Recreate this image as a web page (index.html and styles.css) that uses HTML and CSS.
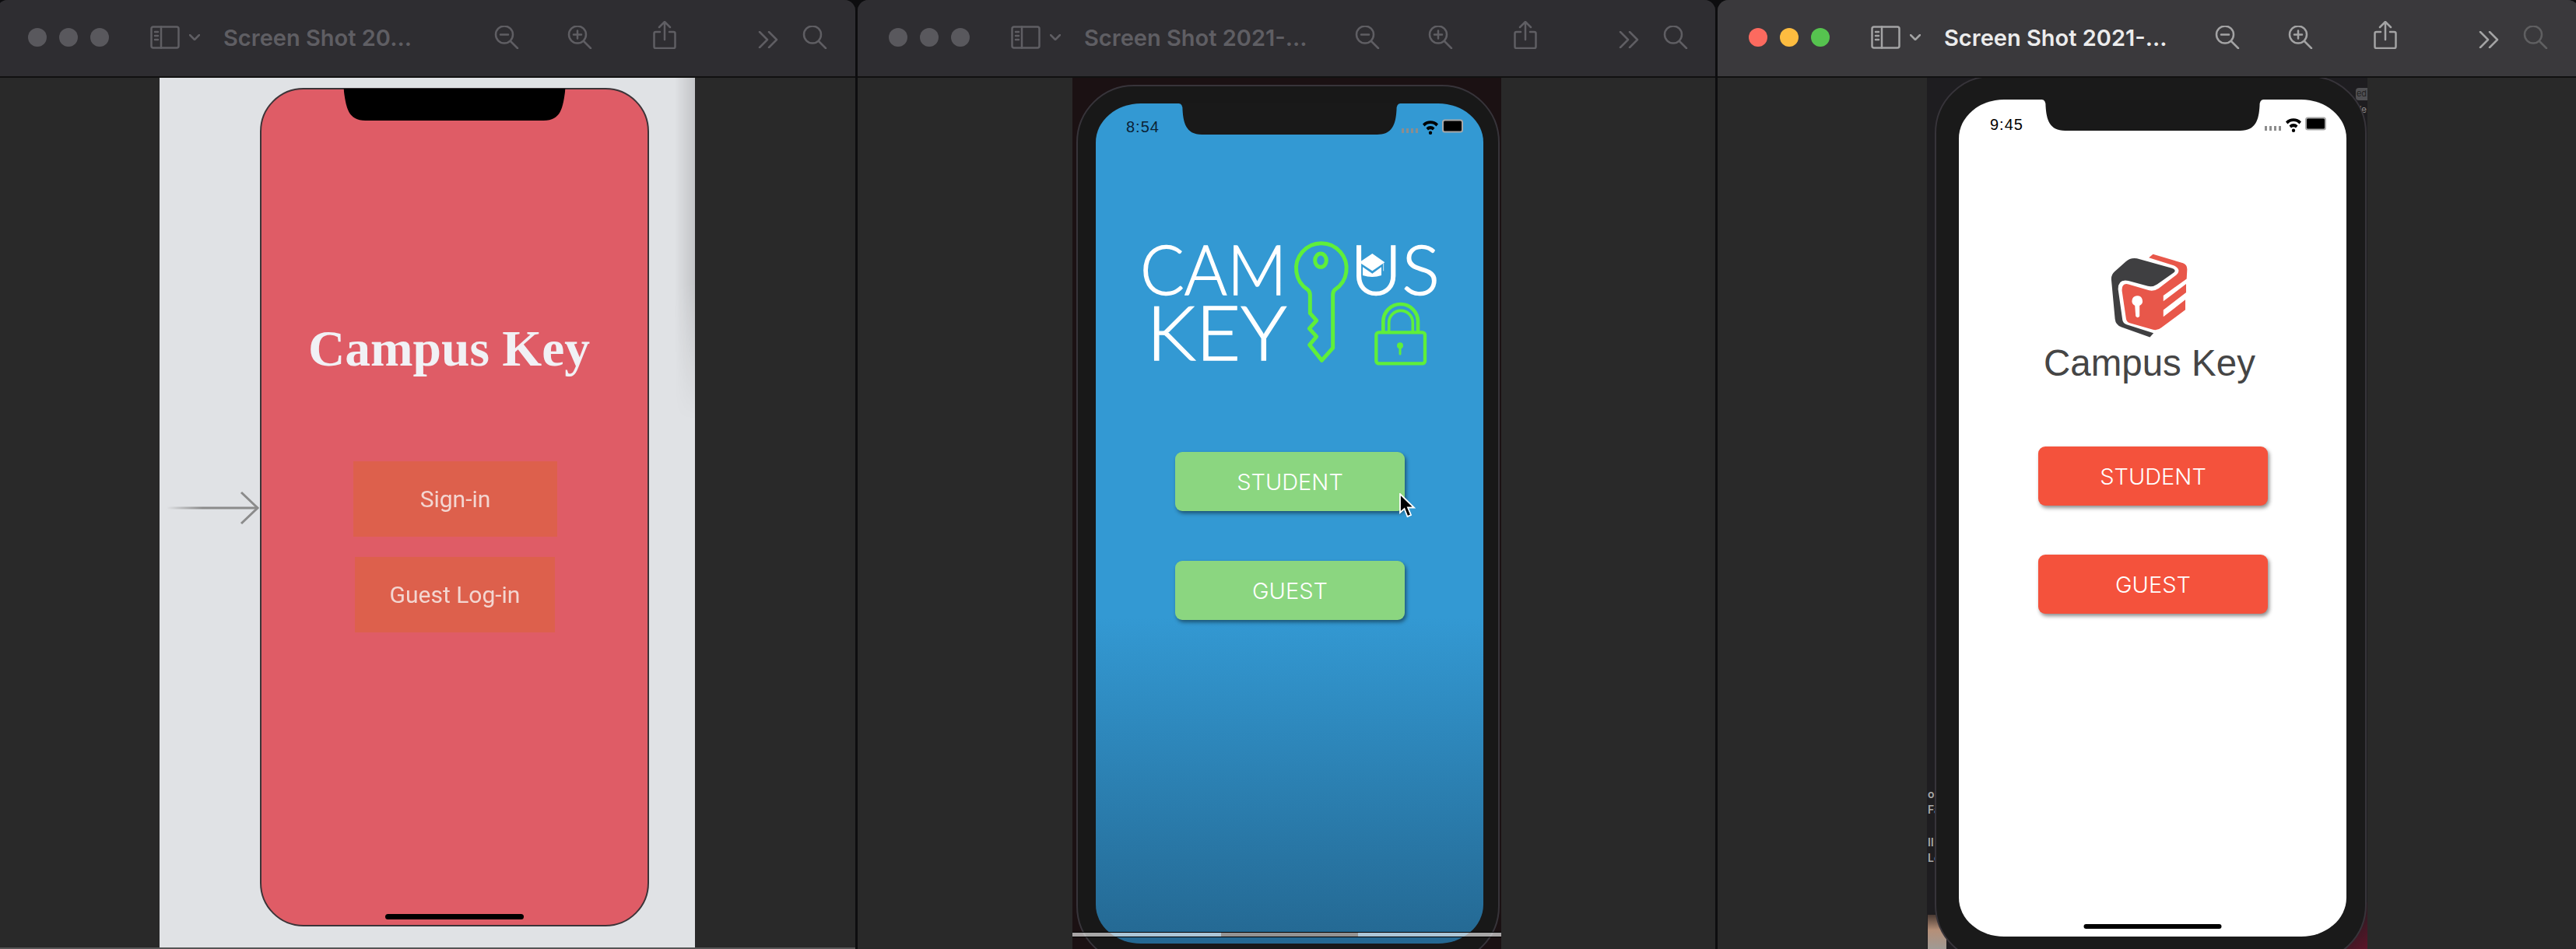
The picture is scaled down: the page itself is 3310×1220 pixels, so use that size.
FILE: index.html
```html
<!DOCTYPE html>
<html lang="en">
<head>
  <meta charset="UTF-8">
  <title>Campus Key screenshots</title>
  <link rel="stylesheet" href="styles.css">
</head>
<body>
  <!-- toolbar icons, used by all three windows -->
  <svg class="defs" width="0" height="0">
    <symbol id="i-sidebar" viewBox="0 0 38 30"><rect x="1.5" y="1.5" width="35" height="27" rx="2.5"/><path d="M14 1.5V28.5M6 8h4M6 13h4M6 18h4"/></symbol>
    <symbol id="i-down" viewBox="0 0 14 8"><path d="M1 1l6 6 6-6"/></symbol>
    <symbol id="i-zoom-out" viewBox="0 0 32 30"><circle cx="13" cy="11.5" r="11"/><path d="M21 20l9 9M8 11.5h10"/></symbol>
    <symbol id="i-zoom-in" viewBox="0 0 32 30"><circle cx="13" cy="11.5" r="11"/><path d="M21 20l9 9M8 11.5h10M13 6.5v10"/></symbol>
    <symbol id="i-share" viewBox="0 0 30 36"><path d="M9 14H3.5a2 2 0 0 0-2 2v17a2 2 0 0 0 2 2h23a2 2 0 0 0 2-2V16a2 2 0 0 0-2-2H21M15 24V2M8 8l7-7 7 7"/></symbol>
    <symbol id="i-more" viewBox="0 0 26 22"><path d="M2 1l10 10L2 21M14 1l10 10-10 10"/></symbol>
    <symbol id="i-search" viewBox="0 0 32 30"><circle cx="13" cy="11.5" r="11"/><path d="M21 20l9 9"/></symbol>
    <symbol id="i-status" viewBox="0 0 82 20">
      <path class="signal" d="M1 12h3v6H1zM7 12h3v6H7zM13 12h3v6h-3zM19 12h3v6h-3z"/>
      <path class="wifi" d="M28 6.5a14 14 0 0 1 20 0l-2.500 3a10 10 0 0 0-15 0zM32.500 11.500a7.500 7.500 0 0 1 11 0l-2.500 3a4 4 0 0 0-6 0zM38 15.500a2.200 2.200 0 1 1 0 4.400 2.200 2.200 0 1 1 0-4.400z"/>
      <rect class="batt" x="54" y="1.500" width="25" height="15" rx="2.500"/>
    </symbol>
  </svg>

  <div class="desktop">
    <!-- storyboard window -->
    <div class="window window-board">
      <div class="toolbar">
        <div class="lights"><i></i><i></i><i></i></div>
        <svg class="ico sidebar"><use href="#i-sidebar"/></svg>
        <svg class="ico down"><use href="#i-down"/></svg>
        <div class="doc-title">Screen Shot 20...</div>
        <svg class="ico zoom-a"><use href="#i-zoom-out"/></svg>
        <svg class="ico zoom-b"><use href="#i-zoom-in"/></svg>
        <svg class="ico share"><use href="#i-share"/></svg>
        <svg class="ico more"><use href="#i-more"/></svg>
        <svg class="ico search"><use href="#i-search"/></svg>
      </div>
      <div class="pane">
        <div class="shot shot-board">
          <svg class="entry-arrow" width="120" height="44" viewBox="0 0 120 44">
            <defs><linearGradient id="fade"><stop offset="0" stop-color="#888" stop-opacity="0"/><stop offset=".4" stop-color="#8b8b8b"/></linearGradient></defs>
            <rect x="0" y="20.500" width="116" height="3" fill="url(#fade)"/>
            <path d="M96 2l21 20-21 20" fill="none" stroke="#8b8b8b" stroke-width="3"/>
          </svg>
          <div class="board-phone">
            <svg class="notch notch-board" viewBox="0 0 285 41"><path d="M0 0 C3 25 6 41 28 41 H257 C279 41 282 25 285 0Z"/></svg>
            <div class="board-title">Campus Key</div>
            <div class="board-btn btn-signin">Sign-in</div>
            <div class="board-btn btn-guest">Guest Log-in</div>
            <div class="home home-board"></div>
          </div>
        </div>
      </div>
    </div>

    <!-- blue simulator window -->
    <div class="window window-blue">
      <div class="toolbar">
        <div class="lights"><i></i><i></i><i></i></div>
        <svg class="ico sidebar"><use href="#i-sidebar"/></svg>
        <svg class="ico down"><use href="#i-down"/></svg>
        <div class="doc-title">Screen Shot 2021-...</div>
        <svg class="ico zoom-a"><use href="#i-zoom-out"/></svg>
        <svg class="ico zoom-b"><use href="#i-zoom-in"/></svg>
        <svg class="ico share"><use href="#i-share"/></svg>
        <svg class="ico more"><use href="#i-more"/></svg>
        <svg class="ico search"><use href="#i-search"/></svg>
      </div>
      <div class="pane">
        <div class="shot shot-blue">
          <div class="frame">
            <div class="screen screen-blue">
              <svg class="notch" viewBox="0 0 285 40"><path d="M0 0 Q5 0 5 8 C6 26 10 40 30 40 H255 C275 40 279 26 280 8 Q280 0 285 0Z"/></svg>
              <div class="status">
                <span class="clock">8:54</span>
                <svg class="status-icons"><use href="#i-status"/></svg>
              </div>
              <svg class="key-logo" viewBox="0 0 1410 660" width="470" height="220">
                <text class="logo-word" x="135" y="297" textLength="565" lengthAdjust="spacingAndGlyphs">CAM</text>
                <text class="logo-word" x="945" y="297" textLength="345" lengthAdjust="spacingAndGlyphs">US</text>
                <text class="logo-word logo-key" x="160" y="548" textLength="540" lengthAdjust="spacingAndGlyphs">KEY</text>
                <path class="green" stroke-width="15" d="M790 368V296Q790 285 781 277A97 97 0 1 1 886 277Q878 285 878 296V502L835 550 788 490 815 458 787 427 815 396Z"/>
                <ellipse class="green" stroke-width="15" cx="831" cy="164" rx="22" ry="26"/>
                <g fill="#fff">
                  <path d="M1030 138L1078 172 1030 205 980 172Z"/>
                  <path d="M993 190L1030 215 1065 190V222Q1030 234 993 222Z"/>
                </g>
                <path d="M1073 174V205" stroke="#d4e6f2" stroke-width="3"/>
                <path class="green" stroke-width="14" d="M1072 440V400A67 67 0 0 1 1206 400V440"/>
                <path class="green" stroke-width="11" d="M1094 440V404A44 44 0 0 1 1186 404V440"/>
                <rect class="green" stroke-width="13" x="1045" y="442" width="188" height="120" rx="10"/>
                <circle cx="1137" cy="493" r="12" fill="#5fef3a"/>
                <path d="M1137 495V525" stroke="#5fef3a" stroke-width="9" stroke-linecap="round"/>
              </svg>
              <div class="app-btn btn-first">STUDENT</div>
              <div class="app-btn btn-second">GUEST</div>
              <svg class="cursor" width="22" height="32" viewBox="0 0 22 32"><path d="M2 1V25L7.500 20 11.500 30 16 28 12 18.500H20Z" fill="#000" stroke="#fff" stroke-width="1.800"/></svg>
            </div>
          </div>
          <div class="scan-band"><div class="scan-home"></div></div>
        </div>
      </div>
    </div>

    <!-- active window, white screen -->
    <div class="window window-white">
      <div class="toolbar">
        <div class="lights"><i class="red"></i><i class="amber"></i><i class="green-dot"></i></div>
        <svg class="ico sidebar"><use href="#i-sidebar"/></svg>
        <svg class="ico down"><use href="#i-down"/></svg>
        <div class="doc-title">Screen Shot 2021-...</div>
        <svg class="ico zoom-a"><use href="#i-zoom-out"/></svg>
        <svg class="ico zoom-b"><use href="#i-zoom-in"/></svg>
        <svg class="ico share"><use href="#i-share"/></svg>
        <svg class="ico more"><use href="#i-more"/></svg>
        <svg class="ico search"><use href="#i-search"/></svg>
      </div>
      <div class="pane">
        <div class="shot shot-white">
          <div class="behind behind-badge">ed</div>
          <div class="behind behind-slash">/e</div>
          <div class="behind behind-list">
            <span>on</span>
            <span>Fa</span>
            <span class="gap">Il</span>
            <span>Lo</span>
          </div>
          <div class="behind behind-photo"></div>
          <div class="behind behind-glow"></div>
          <div class="frame frame-white">
            <div class="screen screen-white">
              <svg class="notch" viewBox="0 0 285 40"><path d="M0 0 Q5 0 5 8 C6 26 10 40 30 40 H255 C275 40 279 26 280 8 Q280 0 285 0Z"/></svg>
              <div class="status">
                <span class="clock">9:45</span>
                <svg class="status-icons"><use href="#i-status"/></svg>
              </div>
              <svg class="box-logo" viewBox="270 75 310 330" width="103" height="110">
                <path fill="#3f3f41" d="M513 134Q533 142 519 152L456 196Q438 208 420 203L345 183Q305 175 305 215L322 335Q324 347 338 352L442 385 428 401 318 362Q295 353 293 330L279 180Q277 160 292 147L335 108Q352 92 378 96Z"/>
                <path fill="#e8574a" d="M345 196L425 220Q445 224 462 212L530 160Q552 142 522 124L424 93 440 80 556 114Q573 120 572 140L570 175 480 240V262L568 195V228L480 296V322L565 256V295L472 364Q458 376 440 372L350 346Q338 342 336 330L320 222Q318 190 345 196Z"/>
                <path fill="#fff" d="M378 241A20 20 0 0 1 388 279L388 320Q381 330 373 320L370 279A20 20 0 0 1 378 241Z"/>
              </svg>
              <div class="brand-name">Campus Key</div>
              <div class="app-btn btn-first">STUDENT</div>
              <div class="app-btn btn-second">GUEST</div>
              <div class="home home-white"></div>
            </div>
          </div>
        </div>
      </div>
    </div>
  </div>
</body>
</html>
```

FILE: styles.css
```css
* {
  box-sizing: border-box;
}

html, body {
  margin: 0;
  height: 100%;
  background-color: #0d0d0f;
  overflow: hidden;
}

body {
  font-family: "Inter", "Liberation Sans", sans-serif;
}

.defs {
  position: absolute;
}

.desktop {
  display: flex;
  gap: 3px;
  width: 3320px;
  height: 1220px;
  margin-left: -4px;
}

.window {
  flex: none;
  display: flex;
  flex-direction: column;
  height: 1220px;
  border-radius: 14px 14px 0 0;
  overflow: hidden;
  background-color: #292929;
  --bar: #2e2d31;
  --ink: #5f5e63;
}

.window-board { width: 1103px; }
.window-blue { width: 1102px; }
.window-white {
  width: 1107px;
  --bar: #3a393c;
  --ink: #a3a3a4;
}

/* toolbar */
.toolbar {
  flex: none;
  display: flex;
  align-items: center;
  height: 100px;
  padding: 0 0 2px 40px;
  background-color: var(--bar);
  border-bottom: 2px solid #111;
  color: var(--ink);
}

.lights {
  display: flex;
  gap: 16px;
}

.lights i {
  width: 24px;
  height: 24px;
  border-radius: 50%;
  background-color: #59585d;
}

.lights .red { background-color: #fc6a5f; }
.lights .amber { background-color: #fdbc40; }
.lights .green-dot { background-color: #56c34f; }

.ico {
  flex: none;
  fill: none;
  stroke: currentColor;
  stroke-width: 2.5;
  stroke-linecap: round;
  stroke-linejoin: round;
}

.sidebar { width: 38px; height: 30px; margin-left: 53px; }
.down { width: 14px; height: 8px; margin-left: 12px; }

.doc-title {
  flex: none;
  width: 348px;
  margin-left: 30px;
  font-size: 29px;
  font-weight: 600;
  white-space: nowrap;
  color: var(--ink);
}

.window-white .doc-title { color: #ececec; }

.zoom-a { width: 32px; height: 30px; }
.zoom-b { width: 32px; height: 30px; margin-left: 62px; }
.share { width: 30px; height: 36px; margin-left: 78px; margin-top: -6px; }
.more { width: 26px; height: 22px; margin-left: 105px; margin-top: 6px; }
.search { width: 32px; height: 30px; margin-left: 31px; }

.window-white .search { color: #5f5f61; }

.pane {
  flex: 1;
  display: flex;
  min-height: 0;
}

.shot {
  position: relative;
  flex: none;
  overflow: hidden;
}

/* storyboard */
.window-board {
  border-bottom: 2px solid #555;
}

.shot-board {
  width: 688px;
  margin-left: 209px;
  padding: 13px 0 0 129px;
  background-color: #e0e2e5;
}

.shot-board::after {
  content: "";
  position: absolute;
  top: 0;
  right: 0;
  width: 26px;
  height: 440px;
  background: linear-gradient(to right, rgba(0, 0, 0, 0), rgba(0, 0, 0, 0.13));
  -webkit-mask-image: linear-gradient(to bottom, #000 60%, transparent);
}

.entry-arrow {
  position: absolute;
  left: 9px;
  top: 531px;
}

.board-phone {
  position: relative;
  display: flex;
  flex-direction: column;
  align-items: flex-start;
  width: 500px;
  height: 1078px;
  border: 2px solid #3c3438;
  border-radius: 56px;
  background-color: #df5c66;
}

.notch {
  position: absolute;
  top: 0;
  left: 50%;
  width: 285px;
  height: 40px;
  transform: translateX(-50%);
  fill: #191919;
}

.notch-board {
  top: -1px;
  height: 41px;
  fill: #000;
}

/* the storyboard part of the reference is a soft, scaled-up capture */
.board-title,
.board-btn {
  filter: blur(0.6px);
}

.board-title {
  margin: 295px 0 0 60px;
  font-family: "Liberation Serif", serif;
  font-size: 65.5px;
  font-weight: bold;
  line-height: 76px;
  white-space: nowrap;
  color: #f1f1f5;
}

.board-btn {
  display: flex;
  align-items: center;
  justify-content: center;
  height: 97px;
  font-family: "Roboto", sans-serif;
  font-size: 30px;
  color: #f3d6d1;
  background-color: #dd604c;
}

.btn-signin {
  width: 262px;
  margin: 107px 0 0 118px;
}

.btn-guest {
  width: 257px;
  margin: 26px 0 0 120px;
}

.home {
  position: absolute;
  left: 50%;
  transform: translateX(-50%);
  border-radius: 4px;
  background-color: #000;
}

.home-board {
  bottom: 7px;
  width: 178px;
  height: 7px;
}

/* phone frame and screen */
.shot-blue {
  width: 551px;
  margin-left: 276px;
  padding: 9px 0 0 5px;
  background-color: #1b1113;
}

.shot-white {
  width: 566px;
  margin-left: 269px;
  padding-left: 10px;
  background-color: #1e1d20;
}

.frame {
  width: 544px;
  height: 1130px;
  padding: 22px 0 0 23px;
  border: 2px solid #37343a;
  border-radius: 74px;
  background-color: #181818;
}

.frame-white {
  position: relative;
  width: 555px;
  height: 1140px;
  margin-top: -3px;
  padding: 29px 0 0 29px;
  background-color: #1a1a1a;
}

.screen {
  position: relative;
  width: 498px;
  height: 1080px;
  border-radius: 58px / 50px;
  overflow: hidden;
}

.screen-blue {
  background: linear-gradient(to bottom, #3399d3 0, #3399d3 660px, #246892 1080px);
}

.screen-white {
  height: 1076px;
  background-color: #fff;
}

.status {
  position: relative;
  display: flex;
  align-items: center;
  justify-content: space-between;
  height: 60px;
  padding: 0 24px 0 39px;
}

.screen-white .status {
  height: 64px;
  padding-left: 40px;
}

.clock {
  font-family: "Liberation Sans", sans-serif;
  font-size: 20px;
  letter-spacing: 1px;
  color: #000;
}

.screen-blue .clock { color: #0b2236; }

.status-icons {
  width: 82px;
  height: 20px;
}

.signal { fill: #8d8d8d; }
.screen-blue .signal { fill: #5e8caa; }
.wifi { fill: #000; }
.batt { fill: #000; stroke: #a8a8a8; stroke-width: 2; }
.screen-blue .batt { stroke: #1f6c9c; }

/* blue logo */
.key-logo {
  display: block;
  margin: 87px 0 0 12px;
}

.logo-word {
  font-family: "Lato", sans-serif;
  font-size: 268px;
  font-weight: 300;
  fill: #fff;
  stroke: #fff;
  stroke-width: 4;
}

.logo-key { font-size: 292px; }

.green {
  fill: none;
  stroke: #5fef3a;
  stroke-linejoin: round;
}

.app-btn {
  display: flex;
  align-items: center;
  justify-content: center;
  width: 295px;
  height: 76px;
  margin-left: 102px;
  border-radius: 9px;
  font-size: 29px;
  font-weight: 300;
  color: #fff;
  background-color: #8bd680;
  box-shadow: 2px 3px 5px rgba(0, 0, 0, 0.45);
}

.screen-blue .btn-first { margin-top: 81px; }
.btn-second { margin-top: 64px; }

.screen-white .app-btn {
  background-color: #f4523c;
}

.screen-white .btn-first { margin-top: 80px; }
.screen-white .btn-second { margin-top: 63px; }

.cursor {
  position: absolute;
  left: 389px;
  top: 501px;
}

.scan-band {
  position: absolute;
  left: 0;
  right: 0;
  top: 1098px;
  height: 7px;
  background-color: rgba(255, 255, 255, 0.62);
  border-top: 1px solid #000;
  border-bottom: 1px solid #000;
}

.scan-home {
  width: 176px;
  height: 5px;
  margin-left: 191px;
  background-color: #939393;
}

/* white screen */
.box-logo {
  display: block;
  margin: 133px 0 0 193px;
}

.brand-name {
  margin: 5px 0 0 109px;
  font-family: "Liberation Sans", sans-serif;
  font-size: 47.500px;
  line-height: 54px;
  white-space: nowrap;
  color: #454545;
}

.home-white {
  bottom: 10px;
  width: 177px;
  height: 6px;
}

/* bits of the desktop behind the simulator */
.behind {
  position: absolute;
}

.behind-badge {
  top: 13px;
  right: 0;
  width: 15px;
  height: 16px;
  border-radius: 4px 0 0 4px;
  font-size: 11px;
  line-height: 15px;
  text-align: center;
  color: #222;
  background-color: #505053;
}

.behind-slash {
  top: 34px;
  right: 1px;
  font-size: 12px;
  line-height: 14px;
  color: #8a8a8a;
}

.behind-list {
  left: 1px;
  top: 914px;
  display: flex;
  flex-direction: column;
  gap: 6px;
  font-size: 14px;
  line-height: 14px;
  font-weight: 600;
  color: #a8a8a8;
}

.behind-list .gap {
  margin-top: 22px;
}

.behind-photo {
  left: 1px;
  bottom: 0;
  width: 24px;
  height: 44px;
  background: linear-gradient(to bottom, #4a3a33 0, #b58f78 45%, #9f9a94 100%);
}

.behind-glow {
  right: 0;
  bottom: 0;
  width: 60px;
  height: 60px;
  background: linear-gradient(135deg, #1e1d20 40%, #5c1428);
}
```
